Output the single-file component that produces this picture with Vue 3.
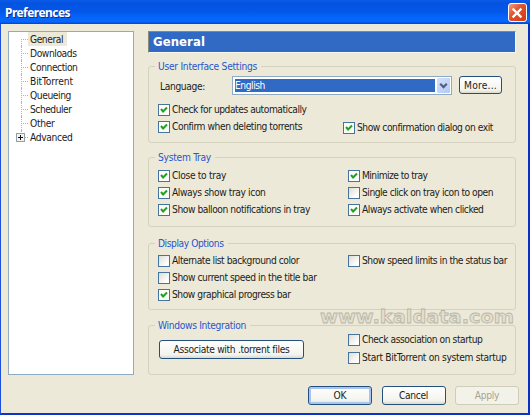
<template>
  <div class="window">
    <header class="titlebar">
      <span class="caption"><span v-fit="65">Preferences</span></span>
      <button class="close-btn" aria-label="Close">
        <svg viewBox="0 0 16 16" width="16" height="16">
          <path d="M3.6 3.6 L12.4 12.4 M12.4 3.6 L3.6 12.4" stroke="#fff" stroke-width="2.2" />
        </svg>
      </button>
    </header>

    <div class="body">
      <ul class="tree">
        <li v-for="item in tree" :key="item.text" :class="{ last: item.expandable }">
          <span v-if="item.expandable" class="expander">
            <svg viewBox="0 0 9 9" width="9" height="9">
              <path d="M2 4.5 H7 M4.5 2 V7" stroke="#111" stroke-width="1" />
            </svg>
          </span>
          <span class="node" :class="{ selected: item.text === current }">
            <span v-fit="item.w">{{ item.text }}</span>
          </span>
        </li>
      </ul>

      <main class="page">
        <h1 class="page-title"><span v-fit="52">General</span></h1>

        <section v-for="group in groups" :key="group.title" class="group" :class="group.id">
          <h2><span v-fit="group.w">{{ group.title }}</span></h2>
          <div v-if="group.id === 'ui'" class="language">
            <label><span v-fit="45">Language:</span></label>
            <div class="combo">
              <span class="value"><span v-fit="30">English</span></span>
              <span class="arrow">
                <svg viewBox="0 0 13 15" width="13" height="15">
                  <path d="M3.2 5.8 L6.5 9.1 L9.8 5.8" fill="none" stroke="#4d6185" stroke-width="2.2" />
                </svg>
              </span>
            </div>
            <button class="btn more"><span v-fit="33">More...</span></button>
          </div>
          <div class="columns">
            <div class="col">
              <button v-if="group.id === 'win'" class="btn associate">
                <span v-fit="116">Associate with .torrent files</span>
              </button>
              <label v-for="opt in group.left" :key="opt.text" class="option">
                <span class="box" :class="{ on: opt.on }">
                  <svg v-if="opt.on" viewBox="0 0 10 10" width="10" height="10">
                    <path d="M2 4 L4.1 6.5 L8 2.5" fill="none" stroke="#21a121" stroke-width="2" />
                  </svg>
                </span>
                <span v-fit="opt.w" class="text">{{ opt.text }}</span>
              </label>
            </div>
            <div class="col right">
              <label v-for="opt in group.right" :key="opt.text" class="option">
                <span class="box" :class="{ on: opt.on }">
                  <svg v-if="opt.on" viewBox="0 0 10 10" width="10" height="10">
                    <path d="M2 4 L4.1 6.5 L8 2.5" fill="none" stroke="#21a121" stroke-width="2" />
                  </svg>
                </span>
                <span v-fit="opt.w" class="text">{{ opt.text }}</span>
              </label>
            </div>
          </div>
        </section>
      </main>
    </div>

    <footer class="actions">
      <button class="btn default"><span v-fit="13">OK</span></button>
      <button class="btn"><span v-fit="29">Cancel</span></button>
      <button class="btn apply" disabled><span v-fit="24.5">Apply</span></button>
    </footer>

    <svg class="watermark" width="204" height="24" viewBox="0 0 204 24">
      <text x="4" y="16.5" textLength="194" lengthAdjust="spacingAndGlyphs">www.kaldata.com</text>
    </svg>
  </div>
</template>

<script setup>
import { ref } from 'vue'

const current = ref('General')

// spreads the letters of a caption over the given width in px
const vFit = {
  mounted(el, { value }) {
    const natural = el.getBoundingClientRect().width
    el.style.letterSpacing = (value - natural) / el.textContent.length + 'px'
  }
}

const tree = [
  { text: 'General', w: 33 },
  { text: 'Downloads', w: 46.5 },
  { text: 'Connection', w: 47.5 },
  { text: 'BitTorrent', w: 43 },
  { text: 'Queueing', w: 41 },
  { text: 'Scheduler', w: 41.5 },
  { text: 'Other', w: 24.5 },
  { text: 'Advanced', w: 42.5, expandable: true }
]

const groups = [
  {
    id: 'ui',
    title: 'User Interface Settings',
    w: 99,
    left: [
      { text: 'Check for updates automatically', on: true, w: 134.5 },
      { text: 'Confirm when deleting torrents', on: true, w: 130 }
    ],
    right: [{ text: 'Show confirmation dialog on exit', on: true, w: 136 }]
  },
  {
    id: 'tray',
    title: 'System Tray',
    w: 53,
    left: [
      { text: 'Close to tray', on: true, w: 54 },
      { text: 'Always show tray icon', on: true, w: 93.5 },
      { text: 'Show balloon notifications in tray', on: true, w: 138 }
    ],
    right: [
      { text: 'Minimize to tray', on: true, w: 65.5 },
      { text: 'Single click on tray icon to open', on: false, w: 131 },
      { text: 'Always activate when clicked', on: true, w: 121.5 }
    ]
  },
  {
    id: 'display',
    title: 'Display Options',
    w: 65.5,
    left: [
      { text: 'Alternate list background color', on: false, w: 127 },
      { text: 'Show current speed in the title bar', on: false, w: 144.5 },
      { text: 'Show graphical progress bar', on: true, w: 118.5 }
    ],
    right: [{ text: 'Show speed limits in the status bar', on: false, w: 145 }]
  },
  {
    id: 'win',
    title: 'Windows Integration',
    w: 88,
    left: [],
    right: [
      { text: 'Check association on startup', on: false, w: 120.5 },
      { text: 'Start BitTorrent on system startup', on: false, w: 144.5 }
    ]
  }
]
</script>

<style>
body {
  margin: 0;
  overflow: hidden;
}
</style>

<style scoped>
* {
  box-sizing: border-box;
}

.window {
  position: relative;
  width: 530px;
  height: 415px;
  background: #ece9d8;
  border: solid #1c50dc;
  border-width: 0 1px 2px;
  border-right: 2px solid #0831c4;
  border-bottom-color: #0a35c8;
  font-family: "DejaVu Sans Condensed", "DejaVu Sans", sans-serif;
  font-size: 10.2px;
  line-height: 14px;
  color: #1c1c1c;
  white-space: nowrap;
}

.titlebar {
  display: flex;
  justify-content: space-between;
  align-items: center;
  height: 24px;
  padding: 1px 1px 0 5px;
  margin: 0 -2px 0 -1px;
  background: linear-gradient(#0a5be8 0, #0453e0 15%, #0256e8 45%, #0566fc 75%, #0567ff 90%, #0144d0 100%);
}

.caption {
  font-family: "Noto Sans", sans-serif;
  font-size: 12px;
  font-weight: bold;
  color: #fff;
  text-shadow: 1px 1px 0 #0a2f90;
}

.close-btn {
  width: 19px;
  height: 19px;
  margin-right: 2px;
  padding: 0;
  border: 1px solid #fff;
  border-radius: 3px;
  background: linear-gradient(135deg, #f0a088, #e2532e 40%, #d03c10);
}

.close-btn svg {
  display: block;
}

.body {
  display: flex;
  gap: 14px;
  padding: 7px 12px 0 7px;
}

.tree {
  width: 126px;
  height: 344px;
  margin: 0;
  padding: 0 0 0 12px;
  list-style: none;
  background: #fff;
  border: 1px solid #8fabc4;
}

.tree li {
  position: relative;
  display: flex;
  align-items: center;
  height: 14px;
  padding-left: 7px;
}

.tree li::before {
  content: "";
  position: absolute;
  left: 0;
  top: 0;
  height: 14px;
  border-left: 1px dotted #b8b5a4;
}

.tree li:first-child::before {
  top: 7px;
  height: 7px;
}

.tree li.last::before {
  height: 4px;
}

.tree li::after {
  content: "";
  position: absolute;
  left: 0;
  top: 7px;
  width: 7px;
  border-top: 1px dotted #b8b5a4;
}

.expander {
  position: absolute;
  z-index: 1;
  left: -5px;
  top: 3px;
  width: 9px;
  height: 9px;
  background: #f4f2ea;
  box-shadow: inset 0 0 0 1px #8f9fae;
}

.expander svg {
  display: block;
}

.node {
  height: 14px;
  padding: 0 4px 0 2px;
  line-height: 16px;
}

.node.selected {
  background: #ece9d8;
}

.page {
  width: 368px;
}

.page-title {
  height: 22px;
  margin: 0 0 13px;
  padding-left: 4px;
  border: 1px solid #f8f7f0;
  border-top-color: #8a8878;
  border-left-color: #8a8878;
  background: #316ac5;
  color: #fff;
  font-size: 13px;
  font-weight: bold;
  line-height: 20px;
}

.group {
  position: relative;
  border: 1px solid #d4d1bf;
  border-radius: 3px;
  padding-left: 9px;
}

.group h2 {
  position: absolute;
  left: 6px;
  top: -8px;
  margin: 0;
  padding: 0 4px 0 3px;
  background: #ece9d8;
  color: #2a55cc;
  font-size: inherit;
  font-weight: normal;
  line-height: 15px;
}

.ui {
  height: 77px;
  margin-bottom: 14px;
}

.tray {
  height: 70px;
  margin-bottom: 16px;
  padding-top: 9px;
}

.display {
  height: 67px;
  margin-bottom: 15px;
  padding-top: 8px;
}

.win {
  height: 50px;
  padding-top: 5px;
}

.language {
  display: flex;
  align-items: center;
  height: 18px;
  margin: 9px 0 7px;
}

.language label {
  width: 74px;
  padding: 3px 0 0 2px;
}

.combo {
  display: flex;
  width: 220px;
  height: 19px;
  padding: 1px;
  border: 1px solid #8fabc4;
  background: #fff;
}

.value {
  flex: 1;
  height: 13px;
  margin: 1px 2px 0 1px;
  line-height: 13px;
  background: #316ac5;
  color: #fff;
}

.arrow {
  width: 13px;
  height: 15px;
  border-radius: 1px;
  background: linear-gradient(135deg, #d5e1fc, #b4c8f6);
}

.arrow svg {
  display: block;
}

.columns {
  display: grid;
  grid-template-columns: 190px 1fr;
}

.ui .columns {
  grid-template-columns: 185px 1fr;
}

.ui .right {
  padding-top: 18px;
}

.win .right .option:first-child {
  margin-bottom: 1px;
}

.option {
  display: flex;
  align-items: center;
  gap: 2px;
  height: 17px;
}

.option .text {
  padding-top: 1px;
}

.box {
  flex: none;
  width: 12px;
  height: 12px;
  border: 1px solid #46749c;
  background: linear-gradient(135deg, #dddcd6, #fff 80%);
}

.box.on {
  background: #fbfcfa;
}

.box svg {
  display: block;
}

.btn {
  height: 19px;
  width: 64px;
  padding: 0;
  border: 1px solid #24507f;
  border-radius: 3px;
  background: linear-gradient(#fff, #f3f3ee 80%, #dcd8cc);
  color: #1c1c1c;
  font: inherit;
  line-height: 15px;
}

.btn.more {
  width: 43px;
  height: 18px;
  margin-left: 7px;
}

.btn.associate {
  width: 145px;
  height: 19px;
  margin: 9px 0 0 1px;
}

.btn.default {
  box-shadow: inset 0 0 0 2px #a9c4f1;
}

.btn.apply {
  border-color: #cfccba;
  background: #f3f2e8;
  color: #a7a493;
}

.actions {
  display: flex;
  justify-content: flex-end;
  gap: 9.5px;
  padding: 11px 9px 0 0;
}

.watermark {
  position: absolute;
  left: 315px;
  top: 306px;
  overflow: visible;
}

.watermark text {
  font-family: "DejaVu Sans", sans-serif;
  font-weight: bold;
  font-size: 18px;
  fill: #e2dfd1;
  stroke: #b9b6a8;
  stroke-width: 0.8px;
}
</style>
